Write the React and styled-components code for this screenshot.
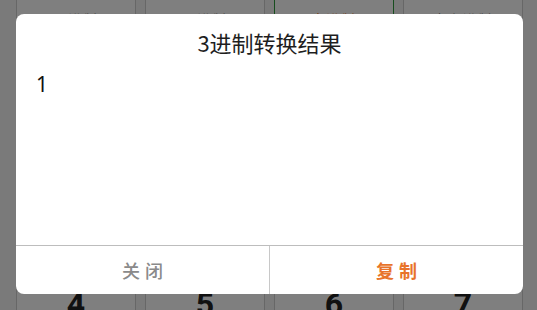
import React from "react";
import styled, { createGlobalStyle } from "styled-components";

const Global = createGlobalStyle`
  html, body { margin: 0; padding: 0; }
  body {
    width: 537px;
    height: 310px;
    overflow: hidden;
    background: #f4f4f4;
    font-family: "Noto Sans CJK SC", "Noto Sans", sans-serif;
  }
`;

const Screen = styled.div`
  position: relative;
  width: 537px;
  height: 310px;
  overflow: hidden;
  background: #f4f4f4;
`;

const Keypad = styled.div`
  display: grid;
  grid-template-columns: repeat(4, 120px);
  grid-template-rows: 270px 60px;
  column-gap: 9px;
  row-gap: 9px;
  padding-left: 16px;
`;

const Key = styled.div`
  box-sizing: border-box;
  background: #ffffff;
  border: 1px solid ${(p) => (p.$active ? "#2f9a3c" : "#cfcfcf")};
  border-top: none;
  display: flex;
  justify-content: center;
  align-items: flex-start;
`;

const KeyLabel = styled.span`
  margin-top: 12px;
  font-size: 13px;
  line-height: 1;
  color: ${(p) => (p.$active ? "#e8742a" : "#8a8a8a")};
  letter-spacing: 2px;
`;

const Digit = styled.span`
  margin-top: 9px;
  font-family: "Roboto", "Liberation Sans", sans-serif;
  font-weight: bold;
  font-size: 32px;
  line-height: 1;
  color: #222222;
`;

const Overlay = styled.div`
  position: absolute;
  inset: 0;
  background: rgba(0, 0, 0, 0.5);
  display: flex;
  padding: 14px 14px 16px 16px;
`;

const Dialog = styled.div`
  flex: 1;
  background: #ffffff;
  border-radius: 8px;
  display: flex;
  flex-direction: column;
  overflow: hidden;
`;

const Title = styled.div`
  height: 56px;
  display: flex;
  align-items: center;
  justify-content: center;
  font-size: 22px;
  color: #1e1e1e;
`;

const Content = styled.div`
  flex: 1;
  padding: 1px 20px 0;
  font-family: "Noto Sans", "Noto Sans CJK SC", sans-serif;
  font-size: 21px;
  line-height: 26px;
  color: #111111;
`;

const Buttons = styled.div`
  height: 48px;
  display: flex;
  border-top: 1px solid #bdbdbd;
`;

const Button = styled.div`
  flex: 1;
  display: flex;
  align-items: center;
  justify-content: center;
  font-size: 18px;
  letter-spacing: 5px;
  text-indent: 5px;
  color: ${(p) => (p.$primary ? "#e8732a" : "#8a8a8a")};
  font-weight: ${(p) => (p.$primary ? 600 : 500)};
  & + & {
    border-left: 1px solid #c8c8c8;
  }
`;

const labels = ["二进制", "八进制", "十进制", "十六进制"];
const digits = ["4", "5", "6", "7"];

export default function App() {
  return (
    <Screen>
      <Global />
      <Keypad>
        {labels.map((l, i) => (
          <Key key={l} $active={i === 2}>
            <KeyLabel $active={i === 2}>{l}</KeyLabel>
          </Key>
        ))}
        {digits.map((d) => (
          <Key key={d}>
            <Digit>{d}</Digit>
          </Key>
        ))}
      </Keypad>
      <Overlay>
        <Dialog>
          <Title>3进制转换结果</Title>
          <Content>1</Content>
          <Buttons>
            <Button>关闭</Button>
            <Button $primary>复制</Button>
          </Buttons>
        </Dialog>
      </Overlay>
    </Screen>
  );
}
